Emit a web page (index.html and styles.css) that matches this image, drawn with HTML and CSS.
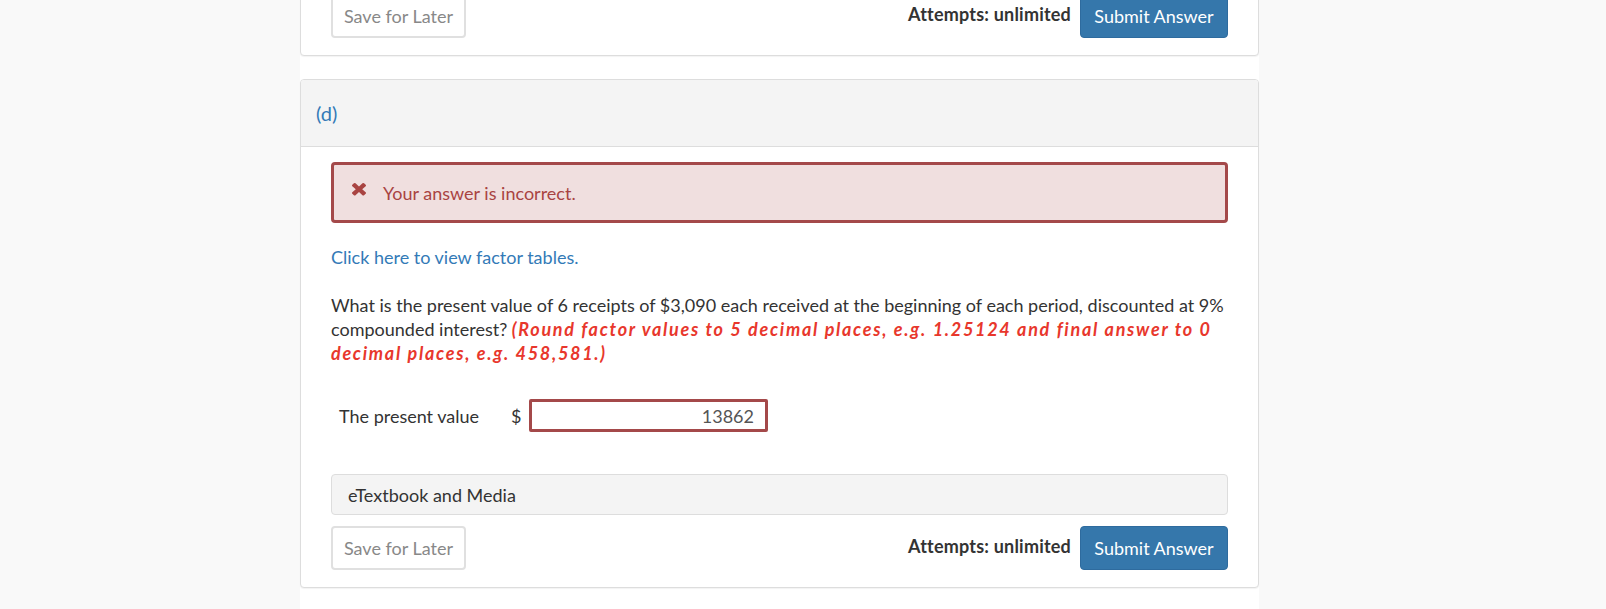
FILE: index.html
```html
<!DOCTYPE html>
<html lang="en">
<head>
<meta charset="utf-8">
<title>Question (d)</title>
<link rel="stylesheet" href="styles.css">
</head>
<body>
<div class="container">
  <section class="panel">
    <div class="panel-body">
      <div class="actions">
        <button class="btn btn-save" type="button">Save for Later</button>
        <div class="submit-group">
          <span class="attempts">Attempts: unlimited</span>
          <button class="btn btn-submit" type="button">Submit Answer</button>
        </div>
      </div>
    </div>
  </section>

  <section class="panel">
    <header class="panel-heading">(d)</header>
    <div class="panel-body">
      <div class="alert">
        <svg class="alert-icon" viewBox="110 366 1188 1188" preserveAspectRatio="none" aria-hidden="true"><path d="M1298 1322q0 40-28 68l-136 136q-28 28-68 28t-68-28l-294-294-294 294q-28 28-68 28t-68-28l-136-136q-28-28-28-68t28-68l294-294-294-294q-28-28-28-68t28-68l136-136q28-28 68-28t68 28l294 294 294-294q28-28 68-28t68 28l136 136q28 28 28 68t-28 68l-294 294 294 294q28 28 28 68z"/></svg>
        <span>Your answer is incorrect.</span>
      </div>

      <p class="factor-link"><a href="#">Click here to view factor tables.</a></p>

      <p class="question">What is the present value of 6 receipts of $3,090 each received at the beginning of each period, discounted at 9% compounded interest? <strong class="hint">(Round factor values to 5 decimal places, e.g. 1.25124 and final answer to 0 decimal places, e.g. 458,581.)</strong></p>

      <div class="answer-row">
        <span class="answer-label">The present value</span>
        <span class="currency">$</span>
        <input class="answer-input" type="text" value="13862">
      </div>

      <div class="media-bar">eTextbook and Media</div>

      <div class="actions">
        <button class="btn btn-save" type="button">Save for Later</button>
        <div class="submit-group">
          <span class="attempts">Attempts: unlimited</span>
          <button class="btn btn-submit" type="button">Submit Answer</button>
        </div>
      </div>
    </div>
  </section>
</div>
</body>
</html>
```

FILE: styles.css
```css
* {
  box-sizing: border-box;
}

html,
body {
  margin: 0;
  padding: 0;
  background: #f9f9f9;
}

body {
  font-family: Lato, "Liberation Sans", Arial, sans-serif;
  font-size: 18px;
  line-height: 24px;
  color: #333;
  overflow: hidden;
}

.container {
  width: 959px;
  margin-left: 300px;
  margin-top: -22px;
  padding-bottom: 60px;
  background: #fff;
}

.panel {
  background: #fff;
  border: 1px solid #ddd;
  border-radius: 4px;
  box-shadow: 0 1px 1px rgba(0, 0, 0, 0.05);
  margin-bottom: 23px;
}

.panel-heading {
  height: 67px;
  padding: 0 15px;
  display: flex;
  align-items: center;
  background: #f4f4f4;
  border-bottom: 1px solid #ddd;
  border-radius: 3px 3px 0 0;
  color: #337ab7;
  font-size: 20px;
}

.panel-body {
  padding: 15px 30px 17px;
}

.alert {
  height: 61px;
  display: flex;
  align-items: center;
  padding: 0 18px;
  background: #f0dfdf;
  border: 3px solid #a4494a;
  border-radius: 4px;
  color: #a94442;
}

.alert-icon {
  width: 14px;
  height: 12.5px;
  fill: #a94442;
  margin-right: 17px;
  margin-bottom: 6px;
  flex: none;
}

.factor-link {
  margin: 22px 0 0;
}

.factor-link a {
  color: #337ab7;
  text-decoration: none;
}

.question {
  margin: 24px 0 0;
}

.hint {
  color: #e8372c;
  font-style: italic;
  font-weight: 700;
  letter-spacing: 1.7px;
}

.answer-row {
  margin-top: 34px;
  display: flex;
  align-items: center;
  height: 33px;
}

.answer-label {
  width: 173px;
  padding-left: 8px;
}

.currency {
  width: 25px;
  padding-left: 7px;
}

.answer-input {
  width: 239px;
  height: 33px;
  border: 3px solid #a4494a;
  border-radius: 2px;
  padding: 0 11px;
  font: inherit;
  color: #555;
  text-align: right;
  background: #fff;
  outline: none;
}

.media-bar {
  margin-top: 42px;
  height: 41px;
  display: flex;
  align-items: center;
  padding-left: 16px;
  background: #f4f4f4;
  border: 1px solid #ddd;
  border-radius: 4px;
  color: #333;
}

.actions {
  margin-top: 11px;
  height: 44px;
  display: flex;
  align-items: center;
  justify-content: space-between;
}

.panel:first-child .actions {
  margin-top: 0;
}

.submit-group {
  display: flex;
  align-items: center;
}

.attempts {
  font-weight: 700;
  letter-spacing: 0.2px;
  margin-right: 9px;
  margin-bottom: 5px;
}

.btn {
  font: inherit;
  height: 44px;
  border-radius: 4px;
  cursor: pointer;
  display: inline-flex;
  align-items: center;
}

.btn-save {
  width: 135px;
  justify-content: center;
  background: #fff;
  border: 2px solid #e0e0e0;
  color: #888;
  padding: 0;
}

.btn-submit {
  width: 148px;
  justify-content: center;
  background: #3577ab;
  border: 1px solid #2e6b9e;
  color: #fff;
  padding: 0;
}
```
